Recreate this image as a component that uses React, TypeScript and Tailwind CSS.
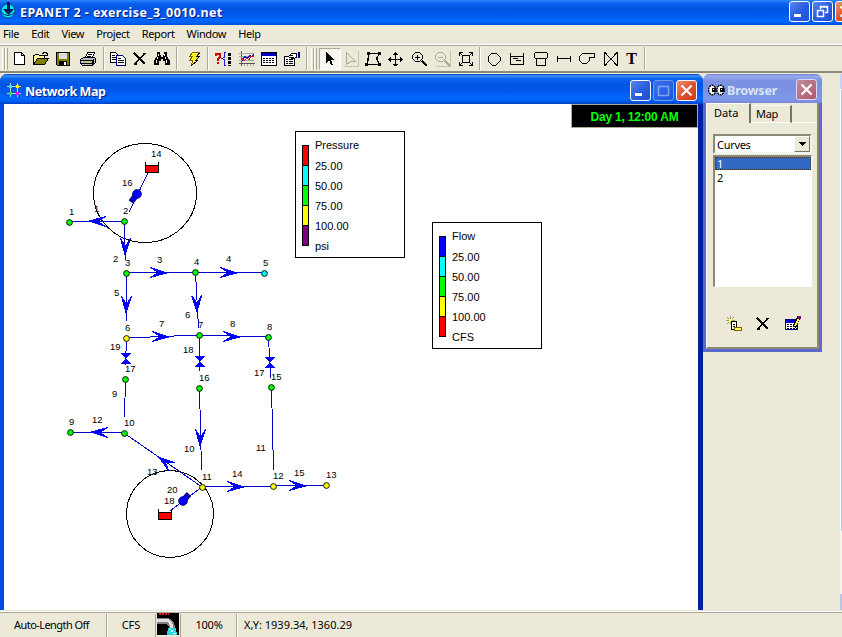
import type { ReactNode } from "react";

const UI = "font-['Noto_Sans','DejaVu_Sans',sans-serif]";
const ARIAL = "font-['Liberation_Sans',Arial,sans-serif]";

function Icon({ children, className = "", w = 16, h = 16 }: { children: ReactNode; className?: string; w?: number; h?: number }) {
  return (
    <svg width={w} height={h} viewBox={`0 0 ${w} ${h}`} shapeRendering="crispEdges" fill="none" stroke="#000" className={`block shrink-0 ${className}`}>
      {children}
    </svg>
  );
}

function CaptionButton({ kind, tone = "blue" }: { kind: "min" | "max" | "restore" | "close"; tone?: "blue" | "red" | "dim" | "faded" }) {
  const tones = {
    blue: "border-white bg-linear-to-br from-[#5a86f0] via-[#2c5ee0] to-[#1c4fd8]",
    red: "border-white bg-linear-to-br from-[#ee9070] via-[#e0532c] to-[#c83a10]",
    dim: "border-[#6b9af0] bg-linear-to-br from-[#3a70e8] to-[#1c55dc]",
    faded: "border-[#d5dbf5] bg-linear-to-br from-[#c08a9c] to-[#b05a68]",
  };
  return (
    <div className={`flex h-[21px] w-[21px] shrink-0 items-center justify-center rounded-[3px] border ${tones[tone]}`}>
      <svg width="19" height="19" viewBox="0 0 19 19" fill="none" stroke="#fff">
        {kind === "min" && <path d="M4 13.500h7" strokeWidth="3" />}
        {kind === "max" && <path d="M4.500 5v9.500h10V5M4 5.500h11" stroke="#7fa4f2" strokeWidth="1.600" />}
        {kind === "restore" && <path d="M4.500 8v6.500h6V8M4 8.500h7M7.500 7V4.500h7v6H12M7 5h8" strokeWidth="1.500" />}
        {kind === "close" && <path d="M4.500 4.500l10 10M14.500 4.500l-10 10" strokeWidth="2.200" />}
      </svg>
    </div>
  );
}

function Sep({ className = "" }: { className?: string }) {
  return <div className={`h-[23px] w-[2px] shrink-0 border-l border-[#aca899] border-r border-r-white ${className}`} />;
}

function Grip({ className = "" }: { className?: string }) {
  return (
    <div className={`flex h-[22px] shrink-0 ${className}`}>
      <div className="w-[3px] border-r border-l border-l-white border-r-[#aca899]" />
      <div className="w-[3px] border-r border-l border-l-white border-r-[#aca899]" />
    </div>
  );
}

function DeleteIcon({ className = "" }: { className?: string }) {
  return (
    <Icon className={className}>
      <path d="M2 2l11 11M13 2L3 13" strokeWidth="1.600" />
      <path d="M2 2.500h2M2 13h3" strokeWidth="2" />
    </Icon>
  );
}

function Toolbar() {
  return (
    <div className="flex h-[27px] shrink-0 items-center border-b-2 border-[#8d8977] bg-[#ece9d8]">
      <Grip className="ml-[2px]" />
      <Icon className="ml-[4px]"><path d="M2.500 1.500h7l3 3v9h-10zM9.500 1.500v3h3" fill="#fff" /></Icon>
      <Icon className="ml-[5px]">
        <path d="M.5 13.500v-9h1l1-1h3l1 1h5v3" fill="#ffffa0" />
        <path d="M.5 13.500l4-6h11l-4 6z" fill="#808000" />
        <path d="M9 2.500h1l1-1h2l1 1v2M12 4.500h3" />
      </Icon>
      <Icon className="ml-[6px]">
        <path d="M1.500 1.500h13v13h-12l-1-1z" fill="#808000" />
        <path d="M4 2h8v6H4z" fill="#ddd" stroke="none" />
        <path d="M4 10h8v5H4z" fill="#000" stroke="none" />
        <path d="M9 11h2v3H9z" fill="#fff" stroke="none" />
      </Icon>
      <Icon className="ml-[9px]">
        <path d="M5.500 6.500l2-5h7l-2 5z" fill="#fff" />
        <path d="M7.500 3.500h4M7 5.500h4" />
        <path d="M.5 8.500l3-2h11l1 1v4l-3 3h-10l-2-2z" fill="#bbb" />
        <path d="M1 9.500h12M1 12.500h11M12.500 9v5M13.500 8v5" />
        <path d="M7 11h3" stroke="#dd0" strokeWidth="1.500" />
      </Icon>
      <Sep className="ml-[7px]" />
      <Icon className="ml-[5px]">
        <path d="M.5 1.500h5l3 3v7h-8z" fill="#fff" />
        <path d="M2 4.500h3M2 6.500h4M2 8.500h4" />
        <path d="M6.500 4.500h6l3 3v7h-9z" fill="#fff" stroke="#000080" />
        <path d="M8 7.500h3M8 9.500h6M8 11.500h6" />
      </Icon>
      <DeleteIcon className="ml-[6px]" />
      <Icon className="ml-[6px]">
        <path d="M3 1h3v3h1v2h2V4h1V1h3v4l3 5v4h-5v-4H9V8H7v2H5v4H0v-4l3-5z" fill="#000" stroke="none" />
        <path d="M4.500 3v2M3.500 6v2M2.500 9v3M10.500 3v2M11.500 6v2M12.500 9v3" stroke="#fff" />
      </Icon>
      <Sep className="ml-[6px]" />
      <Icon className="ml-[8px]">
        <path d="M6.500 1.500h7l-3 4h3l-4 4h2l-6 5 1-5h-3l3-4h-3z" fill="#ffee20" stroke="#806000" />
        <path d="M13.500 2l-3 3.500h3l-4 4h2l-6 5" />
      </Icon>
      <Sep className="ml-[5px]" />
      <Icon className="ml-[6px]" w={18}>
        <path d="M1 5V3h4v3L3 8v2M3 11v2" stroke="#e00000" strokeWidth="2" />
        <path d="M11 1.500H9.500v5L7 7.500l2.500 1v6H11" stroke="#2020e0" />
        <path d="M14.500 2v13" strokeWidth="2.500" strokeDasharray="3 1" />
      </Icon>
      <Icon className="ml-[6px]">
        <path d="M2.500 0v15M0 12.500h16" stroke="#555" />
        <path d="M0 2.500h15M0 5.500h15M0 9.500h15M5.500 13v2M8.500 13v2M11.500 13v2M14.500 13v2" stroke="#a8a8a8" />
        <path d="M3 10l3-5 2 3 3-4 2 2 2-3" stroke="#1818c8" strokeWidth="1.200" />
        <path d="M3 7l2 3 3-3 2 2 2-4 3 1" stroke="#d01818" strokeWidth="1.200" />
      </Icon>
      <Icon className="ml-[6px]">
        <path d="M.5 1.500h15v13H.5z" fill="#fff" />
        <path d="M1 3.500h14" stroke="#0000c8" strokeWidth="3" />
        <path d="M2 7.500h12M2 9.500h12M2 11.500h12" strokeDasharray="2 1" />
      </Icon>
      <Icon className="ml-[7px]">
        <path d="M.5 5.500h10v9H.5z" fill="#fff" />
        <path d="M2 8.500h2M5 8.500h4M2 10.500h2M5 10.500h4M2 12.500h2M5 12.500h4" />
        <path d="M4.500 5.500l3-3h5v4l-3 1h-2z" fill="#fff" />
        <path d="M6 4.500h3M7 6.500h3" />
        <path d="M14.500 1v6" stroke="#000080" strokeWidth="2" />
      </Icon>
      <Sep className="ml-[6px]" />
      <Grip className="ml-[3px]" />
      <div className="ml-[2px] flex h-[22px] w-[22px] items-center justify-center border border-[#aca899] border-r-white border-b-white bg-[#f8f7f1]">
        <Icon><path d="M4 1v11l3-3 2 5h2l-2-5h3z" fill="#000" stroke="none" /></Icon>
      </div>
      <Icon className="ml-[2px]"><path d="M3.500 1.500v12l4-3h5z" stroke="#aca899" /><path d="M.5 15.500h15V0" stroke="#c5c1b0" /></Icon>
      <Icon className="ml-[6px]">
        <path d="M3.500 2.500h11l-3 5 3 6h-13l2-5z" />
        <path d="M2 1h3v3H2zM13 1h3v3h-3zM11 6h2v3h-2zM0 12h3v3H0zM13 12h3v3h-3zM2 7h2v3H2z" fill="#000" stroke="none" />
      </Icon>
      <Icon className="ml-[6px]">
        <path d="M8.500 1v14M1 8.500h15M6 3.500h5M7 2.500h3M6 13.500h5M7 14.500h3M3.500 6v5M2.500 7v3M13.500 6v5M14.500 7v3" />
      </Icon>
      <Icon className="ml-[9px]">
        <path d="M3.500 1.500h4l3 3v3l-3 3h-4l-3-3v-3zM5.500 4v5M3 6.500h5" />
        <path d="M10 10l5 5" strokeWidth="2.200" />
      </Icon>
      <Icon className="ml-[7px]">
        <path d="M3.500 1.500h4l3 3v3l-3 3h-4l-3-3v-3zM3 6.500h5" stroke="#aca899" />
        <path d="M10 10l5 5" strokeWidth="2" stroke="#aca899" />
        <path d="M.5 15.500h15V0" stroke="#c5c1b0" />
      </Icon>
      <Icon className="ml-[7px]">
        <path d="M4.500 4.500h7v7h-7zM1.500 5V1.500H5M11 1.500h3.500V5M1.500 11v3.500H5M14.500 11v3.500H11M2 2l2 2M14 2l-2 2M2 14l2-2M14 14l-2-2" />
      </Icon>
      <Sep className="ml-[5px]" />
      <Icon className="ml-[5px]"><path d="M6 2.500h4l4 4v4l-4 4H6l-4-4v-4z" transform="translate(0 -.5)" /></Icon>
      <Icon className="ml-[7px]"><path d="M1.500 2v11.500h13V2M2 5.500h12M4 7.500h5M7 9.500h5" /></Icon>
      <Icon className="ml-[8px]"><path d="M2.500 1.500h11l1 1v4l-1 1h-11l-1-1v-4zM3.500 8v6.500h9V8" /></Icon>
      <Icon className="ml-[7px]"><path d="M1.500 5v6M14.500 5v6M2 7.500h12" /></Icon>
      <Icon className="ml-[7px]"><path d="M15.500 2.500v4h-5v3l-3 3h-4l-3-3v-4l3-3z" /></Icon>
      <Icon className="ml-[8px]"><path d="M1.500 1v14M1.500 1l13 14M14.500 1v14M14.500 1l-13 14" /></Icon>
      <div className="ml-[3px] w-[19px] text-center font-['Liberation_Serif',serif] text-[16px] leading-[20px] font-bold">T</div>
      <Sep className="ml-[3px]" />
    </div>
  );
}

const NODES: [number, number, string][] = [
  [69, 222, "#00ff00"], [124, 221, "#00ff00"], [126, 273, "#00ff00"], [195, 272, "#00ff00"],
  [264, 273, "#00ffff"], [126, 338, "#ffff00"], [199, 335, "#00ff00"], [268, 337, "#00ff00"],
  [125, 379, "#00ff00"], [199, 388, "#00ff00"], [271, 387, "#00ff00"], [70, 432, "#00ff00"],
  [124, 433, "#00ff00"], [202, 487, "#ffff00"], [273, 486, "#ffff00"], [326, 485, "#ffff00"],
];

const ARROWS: [number, number, number][] = [
  [89, 221, 180], [125, 254, 90], [166, 272, 0], [236, 272, 0], [126, 312, 90], [197, 311, 87],
  [168, 336, 0], [239, 336, 0], [200, 445, 90], [91, 432, 180], [158, 457, 215], [243, 486, 0], [305, 485, 0],
];

const LABELS: [number, number, string][] = [
  [69, 215, "1"], [94, 212, "1"], [123, 214, "2"], [151, 157, "14"], [122, 186, "16"], [113, 262, "2"],
  [125, 266, "3"], [157, 263, "3"], [194, 265, "4"], [226, 262, "4"], [263, 266, "5"], [114, 296, "5"],
  [125, 331, "6"], [185, 318, "6"], [198, 328, "7"], [159, 327, "7"], [230, 327, "8"], [267, 330, "8"],
  [110, 350, "19"], [125, 372, "17"], [183, 353, "18"], [199, 381, "16"], [254, 376, "17"], [271, 380, "15"],
  [112, 397, "9"], [124, 426, "10"], [92, 423, "12"], [69, 425, "9"], [184, 452, "10"], [256, 451, "11"],
  [147, 475, "13"], [202, 480, "11"], [232, 477, "14"], [273, 479, "12"], [294, 476, "15"], [326, 478, "13"],
  [167, 493, "20"], [164, 504, "18"],
];

function NetworkDiagram() {
  return (
    <svg width="694" height="506" viewBox="4 104 694 506" className="block">
      <g shapeRendering="crispEdges">
        <g fill="none" stroke="#000">
          <ellipse cx="145" cy="193" rx="51.500" ry="49.500" />
          <circle cx="170" cy="514" r="43.500" />
        </g>
        <path
          d="M69 222L124 221L125.500 260M126 273L195 272L264 273M126.500 273V321M195.500 272L198.500 328M126 338L199 335L268 337M126.500 338L125.500 365M199.500 335V371M268.500 337L270.500 378M125.500 379L124.500 417M199.500 388L201.500 470M271.500 387L273.500 470M70 432L124 433L202 487L273 486L326 485M202 487L170 511M148 173L129 212"
          fill="none"
          stroke="#0000c8"
        />
        <g fill="#0000ff">
          {ARROWS.map(([x, y, a]) => (
            <path key={`${x}-${y}`} d="M0 .5L-16-5L-9-.5V.5L-16 5Z" stroke="#0000ff" strokeWidth="1" transform={`translate(${x + 0.5} ${y + 0.5}) rotate(${a})`} />
          ))}
          {[[125, 358], [199, 361], [269, 362]].map(([x, y]) => (
            <path key={x} d={`M${x - 5} ${y - 5}h11l-5 5v1l5 5h-11l5-5v-1z`} />
          ))}
        </g>
      </g>
      <path d="M137 194l-6 8M183 501l6-7" stroke="#000060" strokeWidth="6" />
      <path d="M137 194l-5 7M183 501l5-6" stroke="#0000ff" strokeWidth="4" />
      <circle cx="137" cy="194" r="4.300" fill="#0000ff" stroke="#000080" />
      <circle cx="183" cy="501" r="4.300" fill="#0000ff" stroke="#000080" />
      <g shapeRendering="crispEdges" stroke="#000">
        <path d="M145.500 165.500h13v7h-13zM158.500 512.500h13v7h-13z" fill="#ff0000" />
        <path d="M145.500 162v4M158.500 162v4M158.500 509v4M171.500 509v4" />
      </g>
      {NODES.map(([x, y, c]) => (
        <circle key={`${x}-${y}`} cx={x + 0.5} cy={y + 0.5} r="2.900" fill={c} stroke="#000" strokeWidth=".9" />
      ))}
      <g className={`${ARIAL} text-[9.5px]`} fill="#000">
        {LABELS.map(([x, y, t]) => (
          <text key={`${x}-${y}`} x={x} y={y}>{t}</text>
        ))}
      </g>
    </svg>
  );
}

function Legend({ rows, colors, className }: { rows: string[]; colors: string[]; className: string }) {
  return (
    <div className={`absolute flex h-[127px] w-[110px] border border-black bg-white ${className}`}>
      <div className="mt-[13px] ml-[6px] flex h-[101px] w-[7px] flex-col border border-b-0 border-black">
        {colors.map((c) => (
          <div key={c} className={`h-[20px] border-b border-black ${c}`} />
        ))}
      </div>
      <div className={`mt-[3px] ml-[6px] text-[11px] leading-[20px] ${ARIAL}`}>
        <div className="h-[21px]">{rows[0]}</div>
        {rows.slice(1).map((r) => (
          <div key={r}>{r}</div>
        ))}
      </div>
    </div>
  );
}

function MapWindow() {
  return (
    <div className="flex w-[703px] shrink-0 flex-col rounded-t-[7px] bg-[#0831d9]">
      <div className="flex h-[30px] shrink-0 items-center rounded-t-[7px] bg-[linear-gradient(#0a3cc0_0%,#3a91ff_6%,#0a62ee_16%,#0055e5_35%,#0059ee_60%,#0068ff_80%,#0060f8_90%,#0040c0_100%)] pt-[2px] pr-[6px] pl-[7px]">
        <svg width="14" height="14" viewBox="0 0 14 14" shapeRendering="crispEdges">
          <path d="M3.500 0v14M10.500 0v14M0 3.500h14M0 10.500h14" stroke="#c8c8c8" />
          <path d="M2 2h3v3H2z" fill="#00ffff" />
          <path d="M9 2h3v3H9z" fill="#ffff00" />
          <path d="M2 9h3v3H2z" fill="#00ff00" />
          <path d="M9 9h3v3H9z" fill="#ff00ff" />
        </svg>
        <div className={`ml-[4px] pt-[3px] text-[12.5px] leading-[18px] font-bold tracking-[-0.45px] text-white [text-shadow:1px_1px_#0a1883] ${UI}`}>Network Map</div>
        <div className="ml-auto flex gap-[2px]">
          <CaptionButton kind="min" />
          <CaptionButton kind="max" tone="dim" />
          <CaptionButton kind="close" tone="red" />
        </div>
      </div>
      <div className="relative min-h-0 flex-1 border-r-[5px] border-l-4 border-l-[#0048e0] border-r-[#0020a0] bg-white">
        <NetworkDiagram />
        <div className={`absolute top-0 right-0 flex h-[24px] w-[127px] items-center justify-center border border-[#aca899] bg-black pt-px text-[12px] font-bold tracking-[-0.2px] text-[#00ff00] ${ARIAL}`}>
          Day 1, 12:00 AM
        </div>
        <Legend
          className="top-[27px] left-[291px]"
          rows={["Pressure", "25.00", "50.00", "75.00", "100.00", "psi"]}
          colors={["bg-[#ff0000]", "bg-[#00ffff]", "bg-[#00ff00]", "bg-[#ffff00]", "bg-[#800080]"]}
        />
        <Legend
          className="top-[118px] left-[428px]"
          rows={["Flow", "25.00", "50.00", "75.00", "100.00", "CFS"]}
          colors={["bg-[#0000ff]", "bg-[#00ffff]", "bg-[#00ff00]", "bg-[#ffff00]", "bg-[#ff0000]"]}
        />
      </div>
    </div>
  );
}

function BrowserWindow() {
  return (
    <div className="flex h-[278px] w-[119px] shrink-0 flex-col rounded-t-[7px] bg-[#5b68cc] px-[3px] pb-[3px]">
      <div className="-mx-[3px] flex h-[29px] shrink-0 items-center rounded-t-[7px] bg-[linear-gradient(#7184d8_0%,#97a9ec_8%,#7b90e0_25%,#7a94e4_60%,#8098ea_85%,#7a88da_100%)] pt-[2px] pr-[5px] pl-[5px]">
        <svg width="17" height="12" viewBox="0 0 17 12">
          <ellipse cx="4.200" cy="6" rx="3.600" ry="4.800" fill="#fff" stroke="#000" strokeWidth="1.400" strokeDasharray="2 .7" />
          <ellipse cx="12.500" cy="6" rx="3.600" ry="4.800" fill="#fff" stroke="#000" strokeWidth="1.400" strokeDasharray="2 .7" />
          <path d="M4 4h4v4H4zM12 4h4v4h-4z" fill="#000" />
          <path d="M5 5h1v1H5zM13 5h1v1h-1z" fill="#fff" />
        </svg>
        <div className={`ml-[2px] pt-[2px] text-[12.5px] leading-[18px] font-bold tracking-[-0.15px] text-[#d8e4f8] ${UI}`}>Browser</div>
        <div className="ml-auto"><CaptionButton kind="close" tone="faded" /></div>
      </div>
      <div className="flex flex-1 flex-col border-r-2 border-b-2 border-[#8d8977] border-l border-l-white bg-[#ece9d8]">
        <div className={`flex h-[20px] shrink-0 items-end text-[11px] leading-[16px] ${UI}`}>
          <div className="h-[20px] w-[44px] border-t border-r-2 border-t-white border-r-[#77735f] pt-[1px] pl-[7px]">Data</div>
          <div className="h-[18px] w-[41px] border-t border-r-2 border-b border-t-white border-r-[#77735f] border-b-white pl-[5px] tracking-[-0.3px]">Map</div>
          <div className="flex-1 border-b border-white" />
        </div>
        <div className="flex flex-1 flex-col pt-[11px] pr-[5px] pl-[6px]">
          <div className="flex h-[20px] items-stretch border-2 border-[#8d8977] border-r-[#f5f4ec] border-b-[#f5f4ec] bg-white">
            <div className={`flex-1 pl-[2px] text-[11px] leading-[17px] tracking-[-0.3px] ${UI}`}>Curves</div>
            <div className="flex w-[16px] items-center justify-center border border-white border-r-[#77735f] border-b-[#77735f] bg-[#ece9d8]">
              <Icon w={7} h={4}><path d="M0 0h7L4 4H3z" fill="#000" stroke="none" /></Icon>
            </div>
          </div>
          <div className={`mt-[1px] h-[132px] border border-t-2 border-l-2 border-[#8d8977] border-r-white border-b-white bg-white text-[11px] leading-[14px] ${UI}`}>
            <div className="flex h-[13px] items-center border border-dotted border-[#403020] bg-[#316ac5] pl-px text-white">1</div>
            <div className="pt-px pl-[2px]">2</div>
          </div>
          <div className="mt-[29px] flex pl-[13px]">
            <Icon>
              <path d="M1 1l6 6M4.500 0v8M8 1L1 8M0 4.500h9" stroke="#8a8a30" strokeWidth=".8" />
              <path d="M3 3h3v3H3z" fill="#ffff60" stroke="none" />
              <path d="M5.500 5.500h5v8h-5z" fill="#fff" /><path d="M7 8.500h2M7 10.500h2" />
              <path d="M8.500 11.500h7v3h-7z" fill="#ffff60" stroke="#806000" />
            </Icon>
            <DeleteIcon className="ml-[13px]" />
            <Icon className="ml-[14px]">
              <path d="M.5 3.500h12v10H.5z" fill="#fff" stroke="#000080" />
              <path d="M1 5h11" stroke="#0000c8" strokeWidth="3" />
              <path d="M2 8.500h10M2 10.500h10M2 12.500h10" strokeDasharray="2 1" />
              <path d="M14 1L9 11" strokeWidth="4" /><path d="M13.500 3L10 10" stroke="#ffff40" strokeWidth="2" />
              <path d="M13 0h3v3h-3z" fill="#800080" stroke="none" />
            </Icon>
          </div>
        </div>
      </div>
    </div>
  );
}

function StatusBar() {
  const cell = "flex h-full items-center border-r border-[#aca899] shrink-0";
  return (
    <div className={`flex h-[27px] shrink-0 border-t border-[#ece9d8] bg-[#ece9d8] text-[11px] ${UI}`}>
      <div className="flex flex-1 border-t border-white">
        <div className="flex flex-1 border-t border-[#aca899] pt-px">
          <div className={`${cell} w-[107px] pl-[14px] tracking-[-0.55px]`}>Auto-Length Off</div>
          <div className={`${cell} w-[49px] justify-center border-l border-l-white pr-px`}>CFS</div>
          <div className="-mt-px w-[24px] shrink-0">
            <svg width="24" height="22" viewBox="0 0 24 22" shapeRendering="crispEdges">
              <path d="M1 0h22v22H1z" fill="#000" />
              <path d="M3 1h10" stroke="#e02020" strokeWidth="2" strokeDasharray="2 1" />
              <path d="M1 8h8q7 0 7 7" fill="none" stroke="#808080" strokeWidth="6" />
              <path d="M1 7h8q6 0 7 8" fill="none" stroke="#e0e0e0" strokeWidth="3" />
              <path d="M12 15h8l1 7H11z" fill="#20d8e8" />
              <path d="M15 17h2v2h-2zM17 20h3v1h-3zM13 16h2v1h-2z" fill="#fff" />
            </svg>
          </div>
          <div className={`${cell} w-[57px] justify-center border-l border-l-[#aca899] pl-px tracking-[-0.2px]`}>100%</div>
          <div className="flex items-center border-l border-white pl-[6px] whitespace-nowrap">X,Y: 1939.34, 1360.29</div>
        </div>
      </div>
    </div>
  );
}

export default function App() {
  return (
    <div className="flex h-[637px] w-[842px] flex-col overflow-hidden bg-[#ece9d8] text-black">
      <div className="flex h-[25px] shrink-0 items-start overflow-hidden bg-[linear-gradient(#2a86fa_0%,#0a62ee_14%,#0055e5_35%,#0059ee_60%,#0068ff_85%,#0050d8_100%)]">
        <svg width="17" height="20" viewBox="0 0 17 20" className="shrink-0">
          <circle cx="8" cy="11" r="7" fill="#00e8f0" stroke="#003070" strokeWidth=".8" />
          <path d="M7 2h3v7h4l-5.500 6L3 9h4z" fill="#001860" />
          <path d="M1 12q7 7 14 0" fill="none" stroke="#003070" />
        </svg>
        <div className={`ml-[3px] pt-[4px] text-[12.5px] leading-[18px] font-bold tracking-[0.44px] whitespace-nowrap text-white [text-shadow:1px_1px_#0a1883] ${UI}`}>
          EPANET 2 - exercise_3_0010.net
        </div>
        <div className="ml-auto -mr-[14px] flex gap-[2px] pt-[1px]">
          <CaptionButton kind="min" />
          <CaptionButton kind="restore" />
          <CaptionButton kind="close" tone="red" />
        </div>
      </div>
      <div className={`flex h-[21px] shrink-0 gap-[12px] border-b border-[#aca899] pl-[3px] text-[11px] leading-[17px] tracking-[-0.35px] shadow-[inset_0_-1px_#fff] ${UI}`}>
        <span>File</span><span>Edit</span><span>View</span><span>Project</span><span>Report</span><span>Window</span><span>Help</span>
      </div>
      <Toolbar />
      <div className="flex min-h-0 flex-1 pt-px">
        <MapWindow />
        <BrowserWindow />
        <div className="ml-auto flex w-[2px] flex-col bg-[#f4f3ee]">
          <div className="h-[15px] bg-[#c3d3fb]" />
          <div className="mt-px h-[441px] border-l border-white bg-[#b8c8e8]" />
          <div className="mt-auto h-[16px] bg-[#b8c8e8]" />
        </div>
      </div>
      <StatusBar />
    </div>
  );
}
